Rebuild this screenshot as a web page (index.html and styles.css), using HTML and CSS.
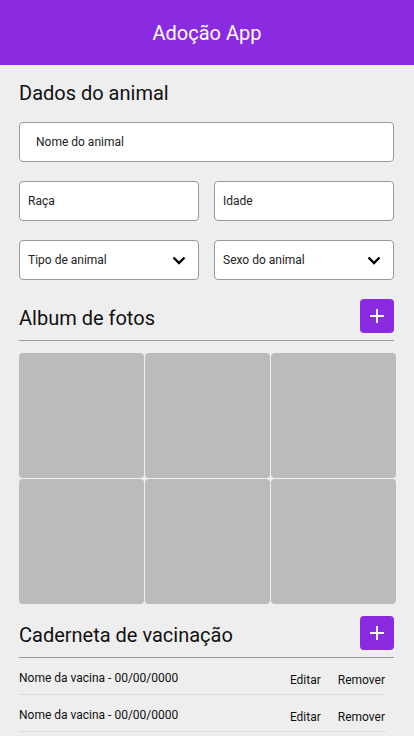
FILE: index.html
```html
<!DOCTYPE html>
<html lang="pt-BR">
<head>
    <meta charset="UTF-8">
    <meta name="viewport" content="width=device-width, initial-scale=1.0">
    <title>Adoção App</title>
    <link rel="stylesheet" href="styles.css">
</head>
<body>
    <header class="topbar">
        <h1>Adoção App</h1>
    </header>

    <main class="content">
        <h2 class="title">Dados do animal</h2>

        <input type="text" class="field field-wide" placeholder="Nome do animal">

        <div class="row">
            <input type="text" class="field" placeholder="Raça">
            <input type="text" class="field" placeholder="Idade">
        </div>

        <div class="row">
            <div class="field select">
                <span>Tipo de animal</span>
                <svg width="14" height="9" viewBox="0 0 14 9"><path d="M1.5 1.5 L7 7 L12.5 1.5" fill="none" stroke="#000" stroke-width="2.4"/></svg>
            </div>
            <div class="field select">
                <span>Sexo do animal</span>
                <svg width="14" height="9" viewBox="0 0 14 9"><path d="M1.5 1.5 L7 7 L12.5 1.5" fill="none" stroke="#000" stroke-width="2.4"/></svg>
            </div>
        </div>

        <!-- Album de fotos -->
        <div class="section-head">
            <h2>Album de fotos</h2>
            <button class="add-btn">
                <svg width="14" height="14" viewBox="0 0 14 14"><path d="M7 0 V14 M0 7 H14" stroke="#fff" stroke-width="2"/></svg>
            </button>
        </div>

        <div class="gallery">
            <div class="photo"></div>
            <div class="photo"></div>
            <div class="photo"></div>
            <div class="photo"></div>
            <div class="photo"></div>
            <div class="photo"></div>
        </div>

        <!-- Caderneta de vacinação -->
        <div class="section-head section-head-vac">
            <h2>Caderneta de vacinação</h2>
            <button class="add-btn">
                <svg width="14" height="14" viewBox="0 0 14 14"><path d="M7 0 V14 M0 7 H14" stroke="#fff" stroke-width="2"/></svg>
            </button>
        </div>

        <ul class="vaccines">
            <li>
                <span>Nome da vacina - 00/00/0000</span>
                <div class="actions"><span>Editar</span><span>Remover</span></div>
            </li>
            <li>
                <span>Nome da vacina - 00/00/0000</span>
                <div class="actions"><span>Editar</span><span>Remover</span></div>
            </li>
        </ul>
    </main>
</body>
</html>
```
FILE: styles.css
```css
body {
    margin: 0;
    padding: 0;
    background-color: #eeeeee;
    color: #111;
    font-family: Roboto, "Liberation Sans", Arial, sans-serif;
}

/* Barra superior */
.topbar {
    height: 65px;
    background-color: #8a2be2;
    display: flex;
    align-items: center;
    justify-content: center;
}

.topbar h1 {
    margin: 0;
    color: #fff;
    font-size: 20px;
    font-weight: 400;
}

.content {
    padding: 0 20px 0 19px;
}

.title {
    margin: 16px 0 0;
    font-size: 20px;
    line-height: 24px;
    font-weight: 400;
}

/* Campos do formulário */
.field {
    box-sizing: border-box;
    width: 100%;
    height: 40px;
    margin: 0;
    padding: 0 8px;
    border: 1px solid #999;
    border-radius: 4px;
    background-color: #fff;
    font-family: inherit;
    font-size: 12px;
    color: #222;
}

.field::placeholder {
    color: #222;
}

.field-wide {
    display: block;
    margin-top: 17px;
    padding: 0 16px;
}

.row {
    display: grid;
    grid-template-columns: 1fr 1fr;
    gap: 15px;
    margin-top: 19px;
}

.select {
    display: flex;
    align-items: center;
    justify-content: space-between;
    padding-right: 12px;
}

/* Cabeçalhos de seção */
.section-head {
    display: flex;
    align-items: center;
    justify-content: space-between;
    margin-top: 19px;
    padding-bottom: 7px;
    border-bottom: 1px solid #999;
}

.section-head h2 {
    margin: 3px 0 0;
    font-size: 20px;
    line-height: 24px;
    font-weight: 400;
}

.section-head-vac {
    margin-top: 12px;
}

.add-btn {
    width: 34px;
    height: 34px;
    padding: 0;
    border: none;
    border-radius: 4px;
    background-color: #8a2be2;
    display: flex;
    align-items: center;
    justify-content: center;
    cursor: pointer;
}

/* Album */
.gallery {
    display: grid;
    grid-template-columns: repeat(3, 125px);
    grid-auto-rows: 125px;
    gap: 1px;
    margin-top: 12px;
}

.photo {
    background-color: #bbbbbb;
    border-radius: 4px;
}

/* Vacinas */
.vaccines {
    list-style: none;
    margin: 0 8px 0 0;
    padding: 0;
}

.vaccines li {
    height: 32px;
    display: flex;
    align-items: center;
    justify-content: space-between;
    padding: 4px 1px 0 0;
    border-bottom: 1px solid #ddd;
    font-size: 12px;
}

.actions {
    display: flex;
    gap: 17px;
    padding-top: 4px;
}
```
